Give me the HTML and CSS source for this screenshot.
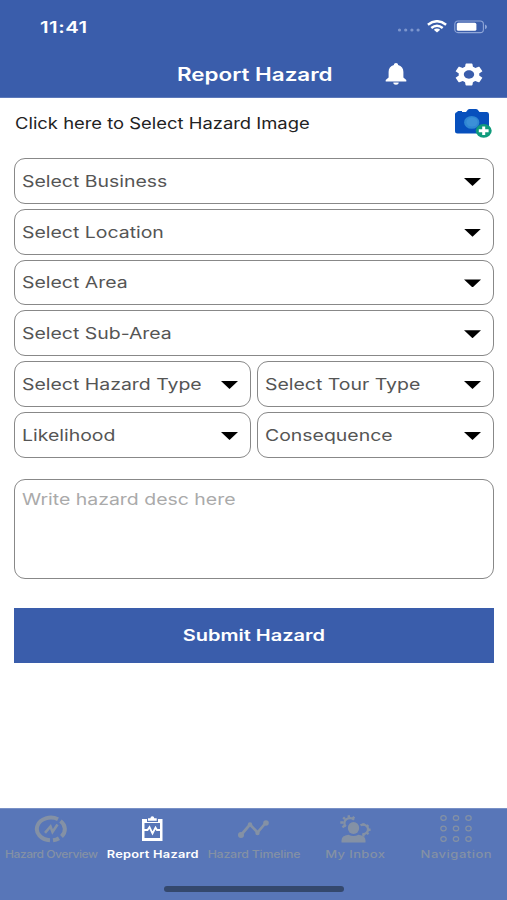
FILE: index.html
```html
<!DOCTYPE html>
<html lang="en">
<head>
<meta charset="utf-8">
<title>Report Hazard</title>
<link rel="stylesheet" href="styles.css">
</head>
<body>
<div class="screen">
  <header class="header">
    <div class="status">
      <span class="wide time">11:41</span>
      <div class="status-icons">
        <svg class="dots" width="24" height="4" viewBox="0 0 24 4"><circle cx="2.5" cy="2" r="1.6"/><circle cx="8.7" cy="2" r="1.6"/><circle cx="14.9" cy="2" r="1.6"/><circle cx="21.1" cy="2" r="1.6"/></svg>
        <svg class="wifi" width="20" height="13" viewBox="0 0 20 13" fill="none" stroke="#fff" stroke-width="2.5"><path d="M.9 4.700Q10-2.200 19.100 4.700"/><path d="M4.300 8Q10 3.400 15.700 8"/><path d="M6.800 9.800Q10 7.400 13.200 9.800L10 12.600z" fill="#fff" stroke="none"/></svg>
        <svg class="battery" width="34" height="14" viewBox="0 0 34 14"><rect x=".8" y="1" width="28.600" height="11.600" rx="3.200" fill="none" stroke="#8fa6d8" stroke-width="1.100"/><rect x="2.800" y="2.800" width="19.600" height="8" rx="1.600" fill="#fff"/><path d="M31 4.400q2 .8 2 2.400t-2 2.400z" fill="#8fa6d8"/></svg>
      </div>
    </div>
    <div class="titlebar">
      <h1 class="wide title">Report Hazard</h1>
      <svg class="bell" width="22" height="22" viewBox="0 0 22 22" fill="#fff"><path d="M11 0c1.300 0 2.100.8 2.100 2 3.500.8 5.300 3.400 5.300 7v5.600l2.900 2.500v1.300H.7v-1.300l2.900-2.500V9c0-3.600 1.800-6.200 5.300-7C8.900.8 9.700 0 11 0zM8.300 19.500h5.400c0 1.300-1.100 2.300-2.700 2.300s-2.700-1-2.700-2.300z"/></svg>
      <svg class="gear" width="28" height="23" viewBox="2.200 2 19.600 20" preserveAspectRatio="none" fill="#fff"><path d="M19.140 12.940c.04-.3.060-.61.060-.94 0-.32-.02-.64-.07-.94l2.030-1.580c.18-.14.230-.41.120-.61l-1.920-3.320c-.12-.22-.37-.29-.59-.22l-2.390.96c-.5-.38-1.030-.7-1.620-.94l-.36-2.540c-.04-.24-.24-.41-.48-.41h-3.840c-.24 0-.43.17-.47.41l-.36 2.540c-.59.240-1.130.570-1.620.940l-2.390-.96c-.22-.08-.47 0-.59.220L2.740 8.870c-.12.210-.08.470.120.610l2.030 1.580c-.05.300-.09.630-.09.940s.020.640.070.940l-2.030 1.580c-.18.140-.23.410-.12.610l1.920 3.320c.120.220.370.290.590.220l2.390-.96c.5.380 1.030.700 1.620.940l.360 2.540c.05.240.240.410.480.410h3.840c.240 0 .440-.170.470-.410l.360-2.540c.590-.240 1.130-.560 1.620-.940l2.390.960c.220.080.470 0 .590-.220l1.920-3.320c.120-.220.070-.470-.120-.610l-2.010-1.580zM12 15.600c-1.980 0-3.600-1.620-3.600-3.600s1.620-3.600 3.600-3.600 3.600 1.620 3.600 3.600-1.620 3.600-3.600 3.600z"/></svg>
    </div>
  </header>

  <main class="main">
    <div class="picker">
      <span class="wide picker-text">Click here to Select Hazard Image</span>
      <svg class="camera" width="40" height="30" viewBox="0 0 40 30"><path d="M1 5.500Q1 3 3.500 3V2H8v1h4l2-2.500Q14.500 0 15.500 0h6.500q1 0 1.500.6L25.500 3H33q2 0 2 2.500V22q0 2.500-2.500 2.500h-29Q1 24.500 1 22z" fill="#0750bd"/><ellipse cx="17.700" cy="13.400" rx="7.600" ry="6.400" fill="#2f87d3"/><ellipse cx="18" cy="13" rx="5.600" ry="4.600" fill="#3b90d8"/><ellipse cx="29.700" cy="21.800" rx="8" ry="6.900" fill="#109b7c"/><path d="M29.700 17.500v8.600M24.800 21.800h9.800" stroke="#fff" stroke-width="3"/></svg>
    </div>
    <div class="fields">
      <div class="field full"><span class="wide">Select Business</span><i class="caret"></i></div>
      <div class="field full"><span class="wide">Select Location</span><i class="caret"></i></div>
      <div class="field full"><span class="wide">Select Area</span><i class="caret"></i></div>
      <div class="field full"><span class="wide">Select Sub-Area</span><i class="caret"></i></div>
      <div class="field"><span class="wide">Select Hazard Type</span><i class="caret"></i></div>
      <div class="field"><span class="wide">Select Tour Type</span><i class="caret"></i></div>
      <div class="field"><span class="wide">Likelihood</span><i class="caret"></i></div>
      <div class="field"><span class="wide">Consequence</span><i class="caret"></i></div>
    </div>
    <div class="desc"><span class="wide">Write hazard desc here</span></div>
    <div class="submit"><span class="wide">Submit Hazard</span></div>
  </main>

  <nav class="tabs">
    <div class="tab">
      <svg width="34" height="28" viewBox="0 0 34 28" fill="none" stroke="currentColor"><path d="M16 25.200A14 11.300 0 1 1 24 4.200" stroke-width="4"/><path d="M26.500 6A14 11.300 0 0 1 27.500 21.500" stroke-width="4"/><path d="M25 23.200A14 11.300 0 0 1 19 25.300" stroke-width="4"/><path d="M11 17.800l5.500-6.300 2 5.500 5-7.500" stroke-width="2.600"/></svg>
      <span class="wide label overview">Hazard Overview</span>
    </div>
    <div class="tab active">
      <svg width="34" height="28" viewBox="0 0 34 28"><path d="M7 4h5v3h11V4h4.500v22H7z" fill="#fff"/><path d="M13 5.800V3.300h2.400Q15.500 1.300 17.300 1.300T19.300 3.300h2.400v2.500z" fill="#fff"/><path d="M9.500 8h15.500v15h-15.500z" fill="#5876b8"/><path d="M8 15h4.500l2-3 3 6.500 3-6 1.500 2.500h4" fill="none" stroke="#fff" stroke-width="1.800"/></svg>
      <span class="wide label report">Report Hazard</span>
    </div>
    <div class="tab">
      <svg width="34" height="28" viewBox="0 0 34 28" fill="currentColor"><path d="M5 20L14 9.500l7.500 8L30 7.500" fill="none" stroke="currentColor" stroke-width="2.700"/><circle cx="5" cy="20" r="3"/><circle cx="14" cy="9.500" r="2.200"/><circle cx="21.500" cy="18" r="2.200"/><circle cx="30" cy="8" r="2.800"/></svg>
      <span class="wide label timeline">Hazard Timeline</span>
    </div>
    <div class="tab">
      <svg width="34" height="28" viewBox="0 0 34 28" fill="currentColor"><ellipse cx="15.500" cy="13" rx="5.700" ry="6"/><path d="M3.500 27.500v-2q0-5 7-5.800 5 2.400 10 0 7 .8 7 5.800v2z"/><path d="M7.800 11.500A5.500 5 0 1 1 16 4.700M22.500 10.300A5 4.700 0 1 1 24.500 19" fill="none" stroke="currentColor" stroke-width="2.300"/><path d="M7 10.500l-2.600 1.700M5.500 7.500H2.300M7 4.200L5.200 2.400M10.800 2.800V.3M14.600 3.800l1.600-2M25.500 10.500V8.200M28.500 11.800l1.900-1.600M29.600 14.800h3M28.500 17.500l2 1.600M25.500 18.500V21.500" fill="none" stroke="currentColor" stroke-width="2.400"/></svg>
      <span class="wide label inbox">My Inbox</span>
    </div>
    <div class="tab">
      <svg width="34" height="28" viewBox="0 0 34 28" fill="none" stroke="currentColor" stroke-width="1.200"><g id="row"><ellipse cx="4.500" cy="3" rx="2.700" ry="2.400"/><ellipse cx="17" cy="3" rx="2.700" ry="2.400"/><ellipse cx="29.500" cy="3" rx="2.700" ry="2.400"/></g><use href="#row" y="10.500"/><use href="#row" y="21"/></svg>
      <span class="wide label navigation">Navigation</span>
    </div>
    <div class="home"></div>
  </nav>
</div>
</body>
</html>
```
FILE: styles.css
```css
* { box-sizing: border-box; }
body { margin: 0; background: #fff; font-family: Inter, "Liberation Sans", sans-serif; }
svg { display: block; flex: none; }
.screen { width: 507px; height: 900px; display: flex; flex-direction: column; overflow: hidden; }
.wide { display: inline-block; white-space: nowrap; transform: scaleX(1.215); transform-origin: left center; }

.header { height: 98px; background: #3a5dab; border-bottom: 1px solid #5c79ba; color: #fff; flex: none; }
.status { height: 53px; padding: 0 19px 0 40px; display: flex; align-items: center; justify-content: space-between; }
.time { font-size: 16px; font-weight: 600; letter-spacing: .4px; transform: scaleX(1.27); }
.status-icons { display: flex; align-items: center; }
.dots { fill: #7d96ce; margin: 7px 6px 0 0; }
.wifi { margin-right: 7px; }
.titlebar { height: 42px; padding: 0 24px 0 176.6px; display: flex; align-items: center; }
.title { margin: 2px 0 0; width: 209.4px; font-size: 18px; font-weight: 600; line-height: 24px; transform: scaleX(1.245); }
.bell { margin-right: 48px; }

.main { flex: 1; padding: 0 13.5px; }
.picker { height: 60px; display: flex; justify-content: space-between; padding: 10px 0 0 1px; }
.picker-text { font-size: 15.5px; line-height: 30px; color: #222; transform: translateY(.6px) scaleX(1.187); }
.camera { margin-top: 1px; }
.fields { display: grid; grid-template-columns: 1fr 1fr; grid-auto-rows: 45.8px; gap: 5px 6px; }
.field { border: 1px solid #888; border-radius: 11px; padding: 0 11.5px 0 7px; display: flex; align-items: center; justify-content: space-between; font-size: 16px; color: #555; }
.full { grid-column: span 2; }
.caret { width: 17px; height: 8px; background: #000; clip-path: polygon(0 0, 100% 0, 50% 100%); margin-top: 2px; }
.desc { height: 100px; margin-top: 21.5px; border: 1px solid #888; border-radius: 11px; padding: 8px 7px; font-size: 16px; line-height: 22px; color: #aaa; }
.submit { height: 55px; margin-top: 28.4px; background: #3a5dab; color: #fff; display: flex; align-items: center; justify-content: center; font-size: 16px; font-weight: 600; }
.submit .wide { transform: scaleX(1.25); transform-origin: center; }

.tabs { height: 92px; flex: none; background: #5876b8; border-top: 1px solid #7890c6; display: grid; grid-template-columns: repeat(5, 101.4px); position: relative; align-content: start; }
.tab { display: flex; flex-direction: column; align-items: center; padding-top: 6px; color: #8491a5; }
.label { margin-top: 5px; font-size: 10.5px; line-height: 14px; font-weight: 500; transform-origin: center; }
.active { color: #fff; }
.overview { letter-spacing: -.4px; transform: translateX(1px) scaleX(1.15); }
.report { font-weight: 600; letter-spacing: .2px; transform: translateX(1px) scaleX(1.22); }
.timeline { letter-spacing: -.2px; transform: translateX(.7px) scaleX(1.18); }
.inbox { letter-spacing: .3px; transform: scaleX(1.24); }
.navigation { letter-spacing: .4px; transform: translateX(.5px) scaleX(1.24); }
.home { position: absolute; left: 164px; top: 77px; width: 180px; height: 6px; border-radius: 3px; background: #34486d; }
```
